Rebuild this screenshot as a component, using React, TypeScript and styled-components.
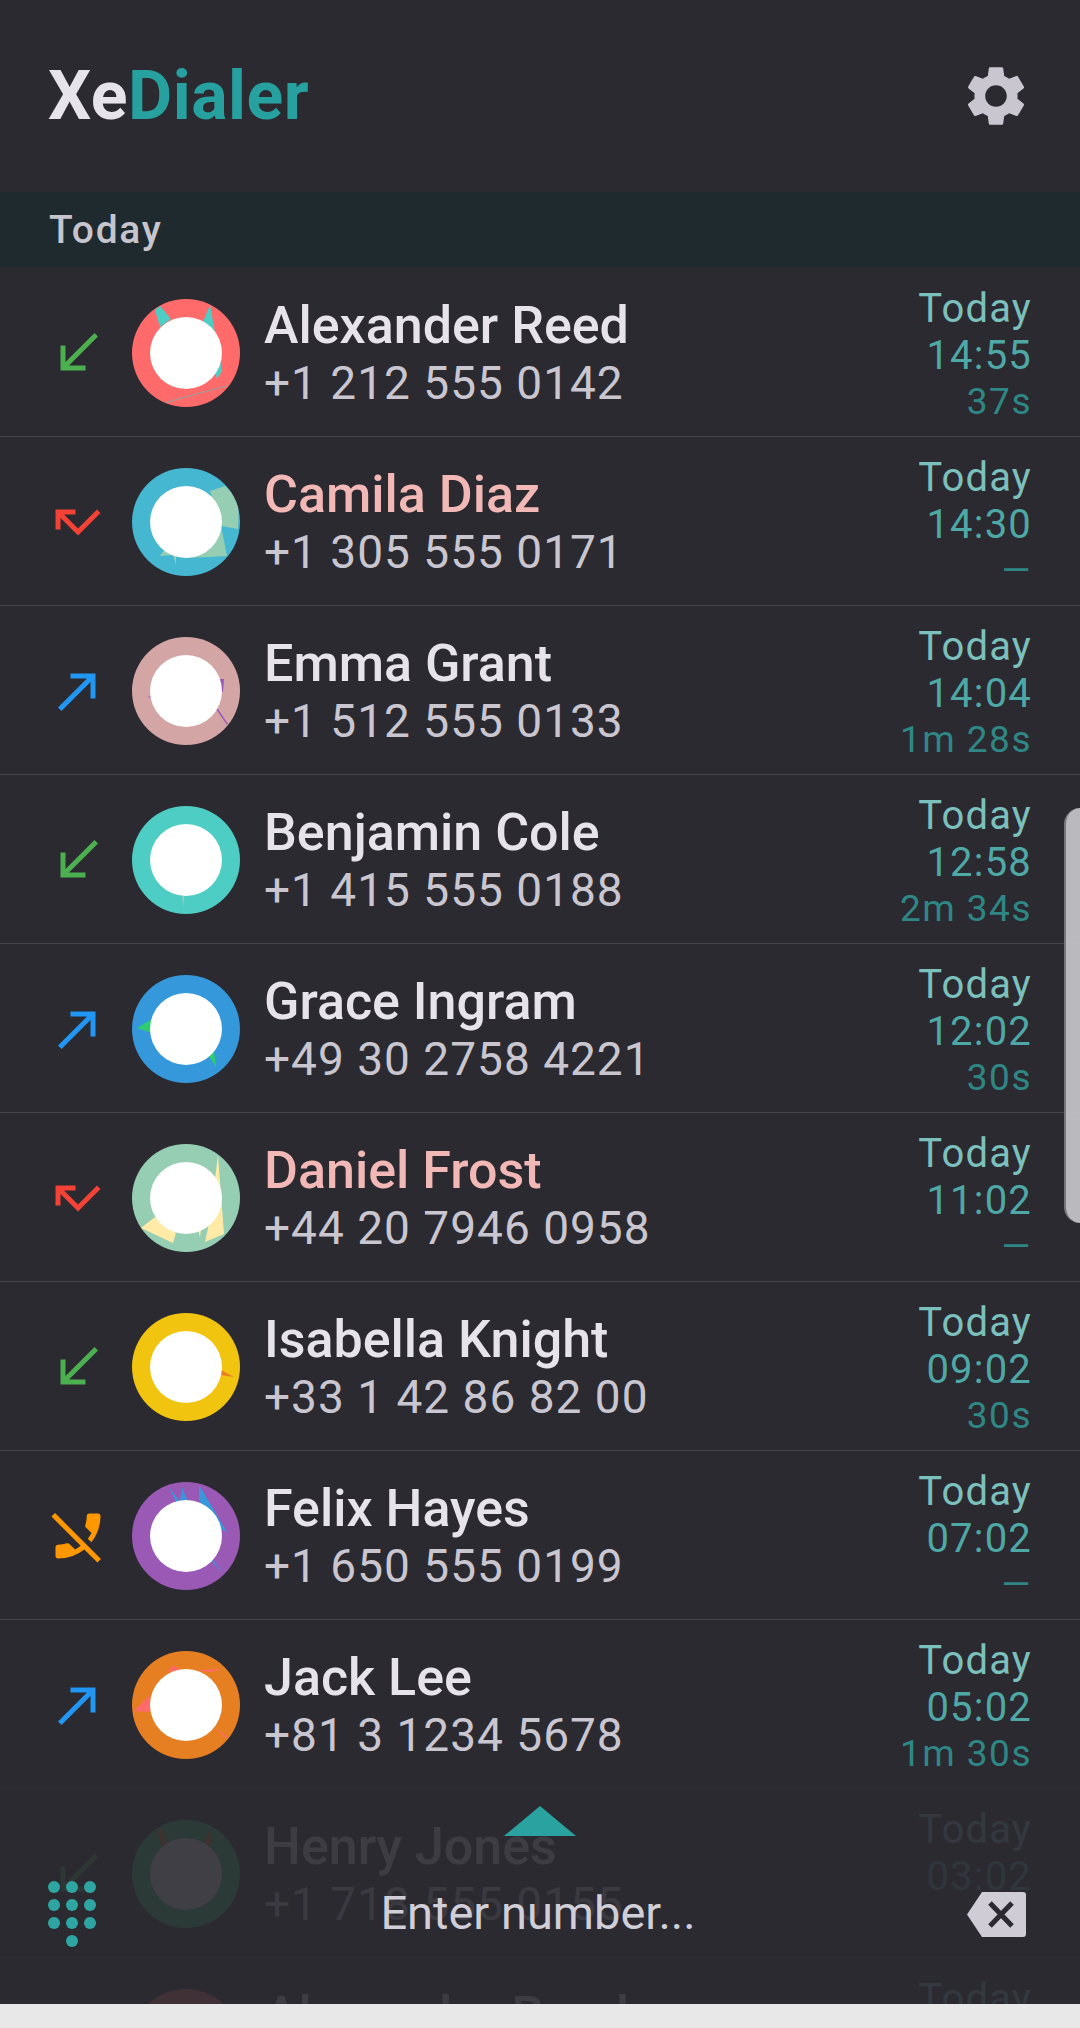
import React from 'react';
import styled, { createGlobalStyle } from 'styled-components';
import { MdCallMade, MdCallMissed, MdCallReceived, MdPhoneDisabled, MdSettings } from 'react-icons/md';

const GlobalStyle = createGlobalStyle`
  html, body {
    margin: 0;
    padding: 0;
    background: #e8e8e8;
    font-family: Roboto, "Liberation Sans", sans-serif;
  }
`;

const Screen = styled.div`
  position: relative;
  width: 1080px;
  height: 2028px;
  display: flex;
  flex-direction: column;
  overflow: hidden;
  background: #2b2a31;
`;

const Header = styled.header`
  flex: none;
  height: 192px;
  display: flex;
  align-items: center;
  justify-content: space-between;
  padding: 0 48px 0 48px;
  color: #c9c6d0;
`;

const Logo = styled.div`
  font-size: 68px;
  font-weight: 700;
  letter-spacing: 0.5px;
  color: #e6e4ea;
`;

const LogoAccent = styled.span`
  color: #26a19f;
`;

const SectionBand = styled.div`
  flex: none;
  height: 75px;
  display: flex;
  align-items: center;
  padding-left: 49px;
  background: #1f2a2f;
  color: #c6c4cd;
  font-size: 39px;
  font-weight: 500;
  letter-spacing: 1.7px;
`;

const List = styled.div`
  flex: 1;
  overflow: hidden;
  padding-top: 1px;
`;

const Row = styled.div`
  height: 168px;
  display: flex;
  align-items: center;
  padding: 0 48px 0 48px;
  border-bottom: 1px solid #45454c;
`;

const DirectionIcon = styled.div<{ $color: string }>`
  flex: none;
  width: 60px;
  height: 60px;
  margin-top: 2px;
  color: ${(p) => p.$color};
  svg {
    display: block;
  }
`;

const AvatarSvg = styled.svg`
  flex: none;
  width: 108px;
  height: 108px;
  margin: 2px 0 0 24px;
`;

const Info = styled.div`
  flex: 1;
  min-width: 0;
  margin: 1px 0 0 24px;
`;

const Name = styled.div<{ $missed: boolean }>`
  font-size: 52px;
  font-weight: 500;
  line-height: 60px;
  color: ${(p) => (p.$missed ? '#f2b8b5' : '#e6e4ea')};
`;

const Phone = styled.div`
  font-size: 46px;
  line-height: 54px;
  letter-spacing: 1px;
  color: #c9c6d0;
`;

const Meta = styled.div`
  flex: none;
  margin-top: 4px;
  text-align: right;
  font-size: 40px;
  line-height: 47px;
  letter-spacing: 1.2px;
`;

const MetaDate = styled.div`
  color: #7bc0bc;
`;

const MetaTime = styled.div`
  color: #4ea8a6;
`;

const MetaDuration = styled.div`
  color: #2f8785;
  font-size: 37px;
  line-height: 45px;
  letter-spacing: 1.5px;
`;

const ScrollThumb = styled.div`
  position: absolute;
  top: 808px;
  right: 0;
  width: 14px;
  height: 415px;
  background: rgba(196, 196, 199, 0.94);
  border-left: 2px solid #77777b;
  border-radius: 16px 0 0 16px;
`;

const DialBar = styled.div`
  position: absolute;
  left: 0;
  right: 0;
  top: 1768px;
  height: 236px;
  display: flex;
  flex-direction: column;
  align-items: center;
  background: linear-gradient(to bottom, rgba(43, 42, 49, 0) 0, rgba(43, 42, 49, 0.9) 18px, rgba(43, 42, 49, 0.9) 100%);
`;

const Handle = styled.div`
  margin-top: 38px;
  width: 0;
  height: 0;
  border-left: 36px solid transparent;
  border-right: 36px solid transparent;
  border-bottom: 30px solid #2aa3a0;
`;

const DialRow = styled.div`
  align-self: stretch;
  display: grid;
  grid-template-columns: 1fr auto 1fr;
  align-items: center;
  margin-top: 45px;
  padding: 0 54px 0 46px;
`;

const DialEnd = styled.div<{ $right?: boolean }>`
  display: flex;
  justify-content: ${(p) => (p.$right ? 'flex-end' : 'flex-start')};
`;

const NumberText = styled.div`
  font-size: 47px;
  line-height: 54px;
  margin: -2px 0 0 4px;
  color: #d0ced6;
`;

const Strip = styled.div`
  position: absolute;
  left: 0;
  right: 0;
  bottom: 0;
  height: 24px;
  background: #e8e8e8;
`;

type Direction = 'in' | 'missed' | 'out' | 'blocked';

interface Poly {
  points: string;
  color?: string;
}

interface Call {
  name: string;
  phone: string;
  time: string;
  duration: string;
  direction: Direction;
  base: string;
  accent: string;
  polys: Poly[];
}

const calls: Call[] = [
  {
    name: 'Alexander Reed', phone: '+1 212 555 0142', time: '14:55', duration: '37s', direction: 'in',
    base: '#ff6b6b', accent: '#4ecdc4',
    polys: [
      { points: '23,11 28,7 39,20 28,28' },
      { points: '78,6 70,25 85,80 90,72' },
      { points: '33,103 96,86 96,87 34,104', color: '#a09a9c' },
    ],
  },
  {
    name: 'Camila Diaz', phone: '+1 305 555 0171', time: '14:30', duration: '—', direction: 'missed',
    base: '#45b7d1', accent: '#96ceb4',
    polys: [
      { points: '78,23 93,18 107,32 106,61 89,58' },
      { points: '89,58 95,88 54,90 44,88 44,97 41,87 28,88 40,70' },
    ],
  },
  {
    name: 'Emma Grant', phone: '+1 512 555 0133', time: '14:04', duration: '1m 28s', direction: 'out',
    base: '#d4a5a5', accent: '#9b59b6',
    polys: [
      { points: '84,72 86,72 96,87 95,88' },
      { points: '88,42 92,42 91,55 86,55' },
      { points: '15,60 20,59 20,61' },
    ],
  },
  {
    name: 'Benjamin Cole', phone: '+1 415 555 0188', time: '12:58', duration: '2m 34s', direction: 'in',
    base: '#4ecdc4', accent: '#96ceb4',
    polys: [{ points: '50,85 53,85 51,102' }],
  },
  {
    name: 'Grace Ingram', phone: '+49 30 2758 4221', time: '12:02', duration: '30s', direction: 'out',
    base: '#3498db', accent: '#2ecc71',
    polys: [
      { points: '5,53 20,44 20,58' },
      { points: '76,80 82,76 84,92' },
    ],
  },
  {
    name: 'Daniel Frost', phone: '+44 20 7946 0958', time: '11:02', duration: '—', direction: 'missed',
    base: '#96ceb4', accent: '#ffeaa7',
    polys: [
      { points: '86,11 92,90 73,98 78,75' },
      { points: '9,84 23,73 44,89 41,99' },
      { points: '66,86 69,86 68,93' },
    ],
  },
  {
    name: 'Isabella Knight', phone: '+33 1 42 86 82 00', time: '09:02', duration: '30s', direction: 'in',
    base: '#f1c40f', accent: '#e67e22',
    polys: [{ points: '89,57 102,64 89,62' }],
  },
  {
    name: 'Felix Hayes', phone: '+1 650 555 0199', time: '07:02', duration: '—', direction: 'blocked',
    base: '#9b59b6', accent: '#3498db',
    polys: [
      { points: '37,5 48,20 44,20' },
      { points: '50,5 56,20 48,20' },
      { points: '67,3 95,50 85,45 67,18' },
      { points: '79,76 91,91 81,81' },
    ],
  },
  {
    name: 'Jack Lee', phone: '+81 3 1234 5678', time: '05:02', duration: '1m 30s', direction: 'out',
    base: '#e67e22', accent: '#ff6b6b',
    polys: [
      { points: '2,60 18,44 18,61' },
      { points: '41,14 48,19 36,21' },
      { points: '64,19 91,18 78,21' },
      { points: '81,76 96,86 94,87' },
    ],
  },
  {
    name: 'Henry Jones', phone: '+1 718 555 0155', time: '03:02', duration: '', direction: 'in',
    base: '#2ecc71', accent: '#e67e22',
    polys: [
      { points: '25,12 30,8 36,24 30,26' },
      { points: '78,8 72,24 80,26' },
    ],
  },
  {
    name: 'Alexander Reed', phone: '+1 212 555 0142', time: '14:55', duration: '37s', direction: 'in',
    base: '#ff6b6b', accent: '#4ecdc4',
    polys: [],
  },
];

const directionIcons: Record<Direction, { icon: React.ReactNode; color: string }> = {
  in: { icon: <MdCallReceived size={60} />, color: '#4caf50' },
  missed: { icon: <MdCallMissed size={60} />, color: '#f44336' },
  out: { icon: <MdCallMade size={60} />, color: '#2196f3' },
  blocked: { icon: <MdPhoneDisabled size={60} />, color: '#ff9800' },
};

const Avatar: React.FC<{ call: Call; id: number }> = ({ call, id }) => (
  <AvatarSvg viewBox="0 0 108 108">
    <clipPath id={`disc-${id}`}>
      <circle cx="54" cy="54" r="54" />
    </clipPath>
    <g clipPath={`url(#disc-${id})`}>
      <rect width="108" height="108" fill={call.base} />
      {call.polys.map((poly, index) => (
        <polygon key={index} points={poly.points} fill={poly.color ?? call.accent} />
      ))}
    </g>
    <circle cx="54" cy="54" r="36" fill="#ffffff" />
  </AvatarSvg>
);

const dialDots = [0, 1, 2, 3].flatMap((row) =>
  (row === 3 ? [1] : [0, 1, 2]).map((col) => ({ cx: 8 + col * 18, cy: 6 + row * 18 })),
);

const DialIcon = () => (
  <svg width="52" height="66" viewBox="0 0 52 66">
    {dialDots.map((dot) => (
      <circle key={`${dot.cx}-${dot.cy}`} cx={dot.cx} cy={dot.cy} r="6" fill="#2fa5a3" />
    ))}
  </svg>
);

const BackspaceIcon = () => (
  <svg width="59" height="45" viewBox="0 0 59 45">
    <path d="M15 0H56a3 3 0 0 1 3 3V42a3 3 0 0 1-3 3H15L0 22.5Z" fill="#cfccd6" />
    <path d="M23 11 45 34M45 11 23 34" stroke="#2b2a31" strokeWidth="5" fill="none" />
  </svg>
);

export default function App() {
  return (
    <Screen>
      <GlobalStyle />
      <Header>
        <Logo>
          Xe<LogoAccent>Dialer</LogoAccent>
        </Logo>
        <MdSettings size={72} />
      </Header>
      <SectionBand>Today</SectionBand>
      <List>
        {calls.map((call, index) => (
          <Row key={index}>
            <DirectionIcon $color={directionIcons[call.direction].color}>
              {directionIcons[call.direction].icon}
            </DirectionIcon>
            <Avatar call={call} id={index} />
            <Info>
              <Name $missed={call.direction === 'missed'}>{call.name}</Name>
              <Phone>{call.phone}</Phone>
            </Info>
            <Meta>
              <MetaDate>Today</MetaDate>
              <MetaTime>{call.time}</MetaTime>
              <MetaDuration>{call.duration || '\u00a0'}</MetaDuration>
            </Meta>
          </Row>
        ))}
      </List>
      <ScrollThumb />
      <DialBar>
        <Handle />
        <DialRow>
          <DialEnd>
            <DialIcon />
          </DialEnd>
          <NumberText>Enter number...</NumberText>
          <DialEnd $right>
            <BackspaceIcon />
          </DialEnd>
        </DialRow>
      </DialBar>
      <Strip />
    </Screen>
  );
}
